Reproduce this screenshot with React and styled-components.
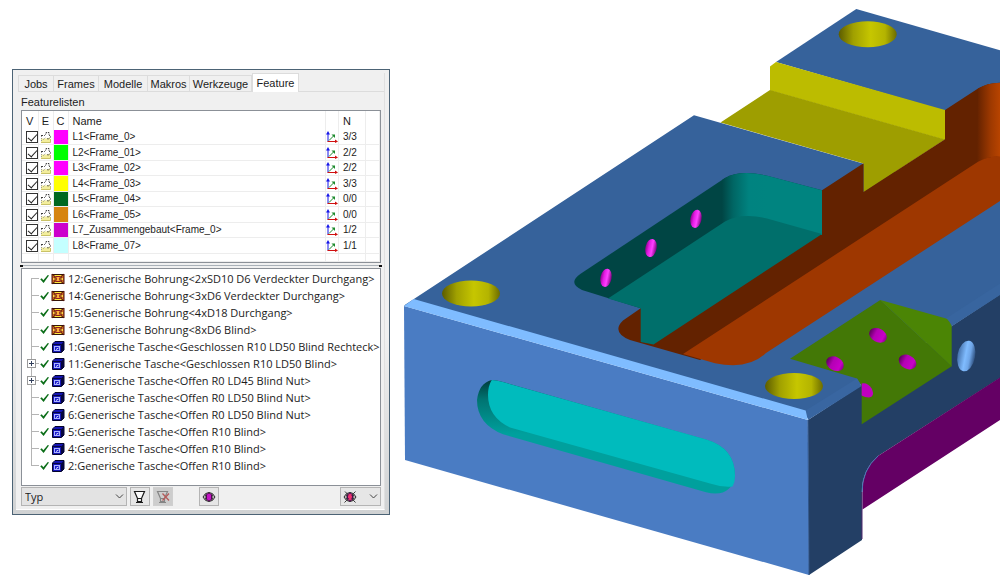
import React, { useState } from 'react';
import styled, { createGlobalStyle } from 'styled-components';

const GlobalStyle = createGlobalStyle`
    * {
        box-sizing: border-box;
    }
    body {
        margin: 0;
        background: #fff;
        color: #1c1c1c;
        font-family: "Liberation Sans", Arial, sans-serif;
        font-size: 11px;
    }
    button, select, input {
        font: inherit;
        color: inherit;
        margin: 0;
    }
`;

const Page = styled.main`
    display: grid;
    grid-template-columns: minmax(0, 378fr) minmax(0, 596fr);
    column-gap: 14px;
    padding-left: 12px;
    align-items: start;
`;

const Window = styled.section`
    margin-top: 69px;
    padding: 3px 4px 4px 3px;
    border: 1px solid #4c6375;
    background: linear-gradient(to bottom, #f0f0f0 60%, #d0d2d3 100%);
`;

const Client = styled.div`
    padding: 0 3px 3px 5px;
    background: #f0f0f0;
    border-bottom: 1px solid #fff;
    border-right: 1px solid #e0e0e0;
`;

const TabList = styled.div`
    display: flex;
    align-items: flex-end;
    height: 19px;
    margin: 0 -3px;
    border-bottom: 1px solid #dcdcdc;
`;

const Tab = styled.button`
    width: ${({ $width }) => $width}px;
    height: ${({ $active }) => ($active ? 19 : 16)}px;
    margin-bottom: ${({ $active }) => ($active ? -1 : 0)}px;
    padding: 0;
    border: 1px solid #dcdcdc;
    border-left-width: ${({ $active, $first }) => ($active || $first ? 1 : 0)}px;
    border-bottom: none;
    background: ${({ $active }) => ($active ? '#fff' : '#f0f0f0')};
    white-space: nowrap;
`;

const Caption = styled.h2`
    margin: 0;
    height: 18px;
    line-height: 20px;
    font-size: 11px;
    font-weight: 400;
`;

const ListBox = styled.div`
    height: 153px;
    border: 1px solid #8b9097;
    background: #fff;
    overflow: hidden;
`;

const FeatureTable = styled.table`
    width: 100%;
    height: 151px;
    table-layout: fixed;
    border-collapse: collapse;
    font-size: 10px;
    line-height: 12px;

    th, td {
        padding: 0;
        border-right: 1px solid #ededed;
        border-bottom: 1px solid #ededed;
        text-align: left;
        font-weight: 400;
        white-space: nowrap;
    }
    th {
        height: 19px;
        font-size: 11px;
        border-bottom: none;
    }
`;

const HeadCell = styled.th`
    && {
        text-align: ${({ $center }) => ($center ? 'center' : 'left')};
        padding-left: ${({ $pad }) => $pad || 0}px;
    }
`;

const TextCell = styled.td`
    && {
        padding-left: 4px;
    }
`;

const IconCell = styled.td`
    line-height: 0;
    svg {
        display: block;
        margin: 0 auto;
    }
`;

const ColorCell = styled.td`
    background: ${({ $color }) => $color};
`;

const Check = styled.input`
    display: grid;
    place-items: center;
    appearance: none;
    width: 12px;
    height: 12px;
    margin: 0 0 0 4px;
    border: 1px solid #333;
    background: #fff;

    &:checked::after {
        content: '';
        width: 4px;
        height: 8px;
        margin-bottom: 2px;
        border: solid #222;
        border-width: 0 1px 1px 0;
        transform: rotate(42deg);
    }
`;

const Splitter = styled.div`
    display: flex;
    align-items: center;
    justify-content: space-between;
    height: 5px;
    margin: 0 -1px;
    background: linear-gradient(#f0f0f0 2px, #a9b1b8 2px, #a9b1b8 3px, #f0f0f0 3px);

    &::before, &::after {
        content: '';
        width: 3px;
        height: 2px;
        background: #111;
    }
`;

const TreeBox = styled.ul`
    height: 218px;
    margin: 0;
    padding: 1px 0 0;
    border: 1px solid #8b9097;
    background: #fff;
    list-style: none;
    overflow: hidden;
`;

const TreeItem = styled.li`
    display: flex;
    align-items: center;
    height: 17px;
    font-family: "Open Sans", "Noto Sans", sans-serif;
    font-size: 11px;
    line-height: 17px;
    white-space: nowrap;

    svg {
        display: block;
        flex: none;
    }
`;

const Expander = styled.button`
    padding: 0;
    border: none;
    background: none;
`;

const TreeText = styled.span`
    padding-left: 3px;
`;

const Toolbar = styled.div`
    display: flex;
    align-items: center;
    gap: 3px;
    padding-top: 1px;
`;

const SelectWrap = styled.label`
    position: relative;
    width: 106px;
    height: 19px;

    svg {
        position: absolute;
        right: 3px;
        top: 6px;
        pointer-events: none;
    }
`;

const Select = styled.select`
    appearance: none;
    width: 100%;
    height: 100%;
    padding: 0 3px;
    border: 1px solid #b4b4b4;
    border-radius: 0;
    background: #e3e3e3;
    font-family: "Open Sans", "Noto Sans", sans-serif;
`;

const ToolButton = styled.button`
    display: flex;
    align-items: center;
    justify-content: ${({ $wide }) => ($wide ? 'space-between' : 'center')};
    width: ${({ $wide }) => ($wide ? 41 : 20)}px;
    height: 19px;
    padding: 0 ${({ $wide }) => ($wide ? 2 : 0)}px;
    border: 1px solid ${({ disabled }) => (disabled ? '#cfcfcf' : '#b4b4b4')};
    background: ${({ disabled }) => (disabled ? '#cdcdcd' : '#e6e6e6')};
`;

const Spacer = styled.span`
    flex: ${({ $grow }) => ($grow ? 1 : 'none')};
    width: 20px;
`;

const Model = styled.svg`
    display: block;
    width: 100%;
    height: auto;
`;

const tabs = [
    { name: 'Jobs', width: 36 },
    { name: 'Frames', width: 45 },
    { name: 'Modelle', width: 49 },
    { name: 'Makros', width: 42 },
    { name: 'Werkzeuge', width: 62 },
    { name: 'Feature', width: 47 },
];

const lists = [
    { name: 'L1<Frame_0>', color: '#ff00ff', count: '3/3' },
    { name: 'L2<Frame_01>', color: '#00ff00', count: '2/2' },
    { name: 'L3<Frame_02>', color: '#ff00ff', count: '2/2' },
    { name: 'L4<Frame_03>', color: '#ffff00', count: '3/3' },
    { name: 'L5<Frame_04>', color: '#006820', count: '0/0' },
    { name: 'L6<Frame_05>', color: '#d68410', count: '0/0' },
    { name: 'L7_Zusammengebaut<Frame_0>', color: '#cc00cc', count: '1/2' },
    { name: 'L8<Frame_07>', color: '#c4ffff', count: '1/1' },
];

const features = [
    { type: 'hole', name: '12:Generische Bohrung<2xSD10 D6 Verdeckter Durchgang>' },
    { type: 'hole', name: '14:Generische Bohrung<3xD6 Verdeckter Durchgang>' },
    { type: 'hole', name: '15:Generische Bohrung<4xD18 Durchgang>' },
    { type: 'hole', name: '13:Generische Bohrung<8xD6 Blind>' },
    { type: 'pocket', name: '1:Generische Tasche<Geschlossen R10 LD50 Blind Rechteck>' },
    { type: 'pocket', name: '11:Generische Tasche<Geschlossen R10 LD50 Blind>', group: true },
    { type: 'pocket', name: '3:Generische Tasche<Offen R0 LD45 Blind Nut>', group: true },
    { type: 'pocket', name: '7:Generische Tasche<Offen R0 LD50 Blind Nut>' },
    { type: 'pocket', name: '6:Generische Tasche<Offen R0 LD50 Blind Nut>' },
    { type: 'pocket', name: '5:Generische Tasche<Offen R10 Blind>' },
    { type: 'pocket', name: '4:Generische Tasche<Offen R10 Blind>' },
    { type: 'pocket', name: '2:Generische Tasche<Offen R10 Blind>' },
];

const EditIcon = () => (
    <svg width="12" height="12" viewBox="0 0 12 12" aria-hidden="true">
        <path d="M1 7.500h6l3-1V11H1z" fill="#f3ee9c" />
        <path d="M1 11.500h9.500V8" fill="none" stroke="#c9c267" />
        <path d="M1 4.500h3.500L6 3V1.500h3V4l2 1.500L8.500 8 6.500 7.500" fill="none" stroke="#3c3c3c" strokeDasharray="2 1" />
        <path d="M1.500 5v6M3 9l3-3" stroke="#999" strokeDasharray="1 1" fill="none" />
    </svg>
);

const AxesIcon = () => (
    <svg width="12" height="12" viewBox="0 0 12 12" aria-hidden="true">
        <path d="M2 10.500V2" stroke="#1515e8" />
        <path d="M0 3.500 2 0l2 3.500z" fill="#1515e8" />
        <path d="M1.500 10.500H10" stroke="#d01010" />
        <path d="M9 8.500 12 10.500 9 12z" fill="#d01010" />
        <path d="M3 9.500 7.500 5" stroke="#1c8a2c" fill="none" />
        <path d="M5.500 3.500H9V7z" fill="#1c8a2c" />
    </svg>
);

const OkIcon = () => (
    <svg width="12" height="12" viewBox="0 0 12 12" aria-hidden="true">
        <path d="M1.200 6.300 2.800 5.300 4.300 7.200 8.800 2 10 2.500 4.600 10z" fill="#0b6e18" />
    </svg>
);

const HoleIcon = () => (
    <svg width="14" height="12" viewBox="0 0 14 12" aria-hidden="true">
        <rect x="1.500" y="1.500" width="11" height="9" fill="#ffcf28" stroke="#35140a" />
        <path d="M1 1 4 3.500v5L1 11zM13 1 10 3.500v5L13 11z" fill="#c9611f" stroke="#4b130c" />
        <path d="M2 5h1.500v2H2zM10.500 5H12v2h-1.500z" fill="#ffd84a" />
        <path d="M4 2.500h6M4 9.500h6" stroke="#ffe838" />
        <path d="M4.500 3.500h5L8.500 6l1 2.500h-5l1-2.500z" fill="#ffb03a" stroke="#8c1c24" />
    </svg>
);

const PocketIcon = () => (
    <svg width="14" height="12" viewBox="0 0 14 12" aria-hidden="true">
        <path d="M1.500 3 4 0.500H13V9L10.500 11.500h-9z" fill="#1414b4" stroke="#04042c" />
        <path d="M10.500 3 13 0.500V9l-2.500 2.500z" fill="#06063c" />
        <path d="M1.500 3.500h9V11" fill="none" stroke="#06063c" />
        <rect x="3.500" y="5.500" width="5" height="4" fill="#1c1cd0" stroke="#a9b2ff" />
        <path d="M5 8.500 7.500 7" stroke="#dfe4ff" />
    </svg>
);

const Branch = ({ first, last, group }) => (
    <svg width="17" height="17" viewBox="0 0 17 17" aria-hidden="true">
        <path
            d={`M9.500 ${first ? 8 : 0}V${last ? 9 : 17}M9.500 8.500H17`}
            stroke="#b4b4b4"
            fill="none"
        />
        {group && (
            <g>
                <rect x="5.500" y="4.500" width="8" height="8" fill="#fff" stroke="#9a9a9a" />
                <path d="M7 8.500h5M9.500 6v5" stroke="#33405c" />
            </g>
        )}
    </svg>
);

const Chevron = () => (
    <svg width="9" height="7" viewBox="0 0 9 7" aria-hidden="true">
        <path d="M1 1.500 4.500 5 8 1.500" fill="none" stroke="#444" />
    </svg>
);

const FilterIcon = ({ cleared }) => (
    <svg width="14" height="14" viewBox="0 0 14 14" aria-hidden="true">
        <path
            d="M1.500 1.500h10L8.500 8.500h-4zM4.500 8.500v3h4v-3"
            fill={cleared ? 'none' : '#fafafa'}
            stroke={cleared ? '#858585' : '#1a1a1a'}
            strokeWidth="1.200"
        />
        <path d="M3 12.500h7" stroke={cleared ? '#858585' : '#1a1a1a'} />
        {cleared && <path d="M6.500 3.500l6.500 7M13 3.500l-6.500 7" stroke="#b55a5a" strokeWidth="1.300" />}
    </svg>
);

const ViewIcon = ({ hidden }) => (
    <svg width="14" height="14" viewBox="0 0 14 14" aria-hidden="true">
        <path d="M1 7Q3 2.500 7 2.500T13 7Q11 11.500 7 11.500T1 7z" fill="#f2ecf2" stroke="#222" />
        <path d="M4 4Q2 7 4 10M10 4Q12 7 10 10" fill="none" stroke="#444" />
        <path d="M7 3 9.500 4.500v5L7 11 4.500 9.500v-5z" fill={hidden ? '#e32a78' : '#c414c4'} stroke="#4c0a4c" />
        {hidden && <path d="M2 1.500 12.500 12.500M12.500 1.500 1.500 12.500" stroke="#3a3a3a" fill="none" />}
        {hidden && <path d="M5.500 5h3v3.500h-3z" fill="#f0306c" />}
    </svg>
);

const boreHoles = [
    [867.700, 34.300],
    [471, 293.500],
    [794, 386],
];

const wallHoles = [
    [606, 277.800],
    [651, 248],
    [696, 218.800],
];

const slopeHoles = [
    [878, 335.300],
    [835, 363.700],
    [907.500, 362],
];

const PartModel = () => (
    <Model viewBox="404 0 596 583" role="img" aria-label="3D">
        <defs>
            <linearGradient id="bore">
                <stop offset="0" stopColor="#5c5c00" />
                <stop offset="0.25" stopColor="#a0a000" />
                <stop offset="0.55" stopColor="#c6c600" />
                <stop offset="0.8" stopColor="#b4b400" />
                <stop offset="1" stopColor="#6c6c00" />
            </linearGradient>
            <linearGradient id="pin">
                <stop offset="0" stopColor="#8c008c" />
                <stop offset="0.3" stopColor="#e41ce4" />
                <stop offset="0.6" stopColor="#ff40ff" />
                <stop offset="1" stopColor="#7c007c" />
            </linearGradient>
            <linearGradient id="drill">
                <stop offset="0" stopColor="#5a005a" />
                <stop offset="0.35" stopColor="#b400b4" />
                <stop offset="0.8" stopColor="#c800c8" />
                <stop offset="1" stopColor="#8a008a" />
            </linearGradient>
            <linearGradient id="sideBore">
                <stop offset="0" stopColor="#4470aa" />
                <stop offset="0.45" stopColor="#80bcff" />
                <stop offset="0.7" stopColor="#6fa6e8" />
                <stop offset="1" stopColor="#2d4e7c" />
            </linearGradient>
            <linearGradient id="tealCorner" gradientUnits="userSpaceOnUse" x1="722" y1="0" x2="767" y2="0">
                <stop offset="0" stopColor="#004544" />
                <stop offset="0.25" stopColor="#006664" />
                <stop offset="0.6" stopColor="#008380" />
                <stop offset="1" stopColor="#008480" />
            </linearGradient>
            <linearGradient id="rustCorner" gradientUnits="userSpaceOnUse" x1="977" y1="0" x2="1000" y2="0">
                <stop offset="0" stopColor="#632200" />
                <stop offset="0.6" stopColor="#9e3900" />
                <stop offset="1" stopColor="#b84400" />
            </linearGradient>
            <linearGradient id="slotWall" gradientUnits="userSpaceOnUse" x1="0" y1="380" x2="0" y2="434">
                <stop offset="0" stopColor="#003c3b" />
                <stop offset="0.35" stopColor="#007371" />
                <stop offset="1" stopColor="#00a09d" />
            </linearGradient>
        </defs>

        {/* top faces */}
        <path d="M404 305.500 694 115.300 863 163.500 1000 200V295L808 418z" fill="#36629b" />
        <path d="M776 62 856.300 9 1000 50.300V84L945 111z" fill="#36629b" />

        {/* step between the two blocks */}
        <path d="M770 66.500 776 62 945 110V140L770 90.500z" fill="#bcbc00" />
        <path d="M770 90 945 139.500 863.500 192.500 863.500 163.500 720.500 122.500z" fill="#9e9e00" />

        {/* long open channel */}
        <path
            d="M822 190.300 863.500 163.300V192L945 139.300V110L978 88.500Q987 83 1000 82.700V160L700 360 630 340Q611 332 623 320.500L640.700 308.300z"
            fill="#632200"
        />
        <path d="M978 88.500Q987 83 1000 82.700V157Q988 156 977 162.500z" fill="url(#rustCorner)" />
        <path d="M683 354 978 161.700Q988 156 1000 156.500V201L766 353Q749 370 715 363.200z" fill="#9e3700" />

        {/* closed pocket */}
        <path d="M581 273.500 725 178Q740 169.500 767 175.700L822 190.300V234L640.700 308.300 582 290Q567 283 581 273.500z" fill="#004544" />
        <path d="M722 180 725 178Q740 169.500 767 175.700V225H722z" fill="url(#tealCorner)" />
        <path d="M766.500 175.600 822 190.300V235L766.500 221z" fill="#008480" />
        <path d="M608 298.500 725 221.500Q742 212.500 767 218.500L822 234 653.500 344.500 640.700 342V308.300z" fill="#006f6b" />
        {wallHoles.map(([x, y]) => (
            <ellipse key={x} cx={x} cy={y} rx="5.600" ry="9.200" transform={`rotate(11 ${x} ${y})`} fill="url(#pin)" />
        ))}

        {/* side faces */}
        <path d="M808 420 1000 294.500V378L878 456Q862 470 862 492V540L809 575z" fill="#233f65" />
        <path d="M1000 377.500 878 456Q862 470 862.500 492V509.500L1000 420z" fill="#640064" />
        <path d="M878 456Q862 470 862 492" fill="none" stroke="#4876b4" />
        <path d="M862 492V539" stroke="#51286f" />
        <path d="M946 318.500 1000 283.500V295L952 326z" fill="#38659f" />

        {/* sloped cut */}
        <path d="M790 358.700 880.300 300 951.700 366.300 861.700 424.300V386L857 378.500z" fill="#437806" />
        <path d="M880.300 300 946 318.500Q949 320 951.700 326V366.500z" fill="#4b8505" />
        {slopeHoles.map(([x, y]) => (
            <ellipse key={x} cx={x} cy={y} rx="9.300" ry="6.800" transform={`rotate(27 ${x} ${y})`} fill="url(#drill)" />
        ))}
        <path d="M861.700 383.500Q868 382.500 872 389 875 397 869 397.500 865 397.500 861.700 395.500z" fill="#c000c0" />
        <ellipse cx="966.300" cy="356" rx="8.800" ry="15.500" transform="rotate(11 966.300 356)" fill="url(#sideBore)" />

        {boreHoles.map(([x, y]) => (
            <ellipse key={x} cx={x} cy={y} rx="29" ry="13" fill="url(#bore)" />
        ))}

        {/* front face and its chamfers */}
        <path d="M805.700 410.500 857 378.500 861.700 386 808 420z" fill="#3966a1" />
        <path d="M404 306 807.800 420 809 575 405 460z" fill="#4a7cc3" />
        <path d="M404 306 413.700 299 805.700 410.500 807.800 420z" fill="#7fbcff" />
        <path d="M808 420 809 575" stroke="#2f558b" />

        {/* slot in the front face */}
        <path
            d="M491.700 380Q496 380 503 382L706 439.500Q735 448 735 476 731 498 706 492.300L503 434.300Q477 424 477 400 479 383 491.700 380z"
            fill="url(#slotWall)"
        />
        <path
            d="M491.700 380Q496 380 503 382L706 439.500Q735 448 735 476 735 482 732.500 486.500 722 487.500 710 483.500L510 427.500Q488 417 488 395 488 386 491.700 380z"
            fill="#00bbbd"
        />
    </Model>
);

const FeaturePanel = () => {
    const [active, setActive] = useState('Feature');
    const [visible, setVisible] = useState(lists.map(() => true));

    const toggle = (i) => setVisible(visible.map((v, n) => (n === i ? !v : v)));

    return (
        <Window>
            <Client>
                <TabList role="tablist">
                    {tabs.map((tab, i) => (
                        <Tab
                            key={tab.name}
                            role="tab"
                            aria-selected={active === tab.name}
                            $active={active === tab.name}
                            $first={i === 0}
                            $width={tab.width}
                            onClick={() => setActive(tab.name)}
                        >
                            {tab.name}
                        </Tab>
                    ))}
                </TabList>
                <Caption>Featurelisten</Caption>
                <ListBox>
                    <FeatureTable>
                        <colgroup>
                            <col width="16" />
                            <col width="15" />
                            <col width="15" />
                            <col />
                            <col width="13" />
                            <col width="27" />
                            <col width="14" />
                        </colgroup>
                        <thead>
                            <tr>
                                <HeadCell $center>V</HeadCell>
                                <HeadCell $center>E</HeadCell>
                                <HeadCell $center>C</HeadCell>
                                <HeadCell $pad={4}>Name</HeadCell>
                                <HeadCell />
                                <HeadCell $pad={4}>N</HeadCell>
                                <HeadCell />
                            </tr>
                        </thead>
                        <tbody>
                            {lists.map((list, i) => (
                                <tr key={list.name}>
                                    <IconCell>
                                        <Check
                                            type="checkbox"
                                            aria-label={list.name}
                                            checked={visible[i]}
                                            onChange={() => toggle(i)}
                                        />
                                    </IconCell>
                                    <IconCell><EditIcon /></IconCell>
                                    <ColorCell $color={list.color} />
                                    <TextCell>{list.name}</TextCell>
                                    <IconCell><AxesIcon /></IconCell>
                                    <TextCell>{list.count}</TextCell>
                                    <td />
                                </tr>
                            ))}
                        </tbody>
                        <tfoot>
                            <tr>
                                <td height="8" /><td /><td /><td /><td /><td /><td />
                            </tr>
                        </tfoot>
                    </FeatureTable>
                </ListBox>
                <Splitter />
                <TreeBox>
                    {features.map((feature, i) => (
                        <TreeItem key={feature.name}>
                            {feature.group ? (
                                <Expander aria-label={feature.name}><Branch group /></Expander>
                            ) : (
                                <Branch first={i === 0} last={i === features.length - 1} />
                            )}
                            <OkIcon />
                            {feature.type === 'hole' ? <HoleIcon /> : <PocketIcon />}
                            <TreeText>{feature.name}</TreeText>
                        </TreeItem>
                    ))}
                </TreeBox>
                <Toolbar>
                    <SelectWrap>
                        <Select aria-label="Typ" defaultValue="Typ">
                            <option>Typ</option>
                        </Select>
                        <Chevron />
                    </SelectWrap>
                    <ToolButton aria-label="Filter"><FilterIcon /></ToolButton>
                    <ToolButton aria-label="Filter" disabled><FilterIcon cleared /></ToolButton>
                    <Spacer />
                    <ToolButton aria-label="Feature"><ViewIcon /></ToolButton>
                    <Spacer $grow />
                    <ToolButton aria-label="Feature" $wide>
                        <ViewIcon hidden />
                        <Chevron />
                    </ToolButton>
                </Toolbar>
            </Client>
        </Window>
    );
};

const App = () => {
    return (
        <>
            <GlobalStyle />
            <Page>
                <FeaturePanel />
                <PartModel />
            </Page>
        </>
    );
};

export default App;
